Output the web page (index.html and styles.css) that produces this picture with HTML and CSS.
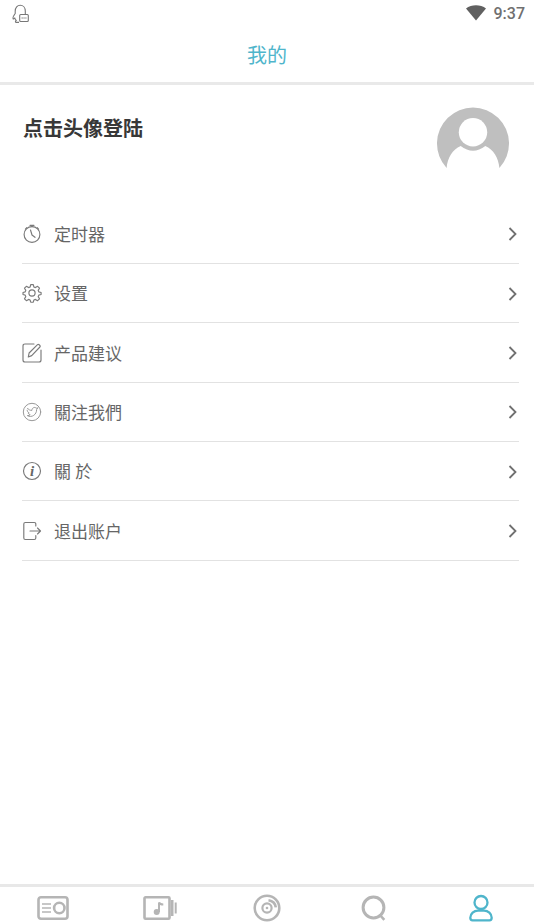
FILE: index.html
```html
<!DOCTYPE html>
<html lang="zh-CN">
<head>
<meta charset="utf-8">
<title>我的</title>
<link rel="stylesheet" href="styles.css">
</head>
<body>
<div class="status">
  <svg class="status-bell" width="20" height="20" viewBox="0 0 20 20" fill="none" stroke="#777" stroke-width="1.1" stroke-linejoin="round"><path d="M15.300 10V7.200C15.300 3.400 13 1.200 10.200 1.200S5.200 3.400 5.200 7.200v2.300C3.800 11.300 2.700 13.400 3.100 14.800c.4.500 1-.1 1.700-.8.2 1 .8 1.900 1.500 2.500-.9.500-1.300 1.500-.3 1.900h3"/><rect x="9.700" y="10.500" width="8.600" height="7" rx="1"/><path d="M11.500 14h5" stroke-dasharray="1.300 .6"/></svg>
  <div class="status-right">
    <svg width="20" height="16" viewBox="0 0 20 16"><path d="M0 3.500C5.500-.9 14.500-.9 20 3.500L10 15.600z" fill="#606060"/></svg>
    <span>9:37</span>
  </div>
</div>
<header class="header"><h1>我的</h1></header>
<main class="main">
  <section class="profile">
    <h2>点击头像登陆</h2>
    <svg class="avatar" width="72" height="72" viewBox="0 0 72 72"><path d="M9.600 61A36 36 0 1 1 62.400 61C61.500 51 56.500 42.500 48.300 39Q36 48.500 23.700 39C15.500 42.500 10.500 51 9.600 61z" fill="#bfbfbf"/><circle cx="36" cy="25.200" r="14.200" fill="#fff"/></svg>
  </section>
  <nav class="menu">
    <a class="row">
      <svg class="icon" viewBox="0 0 20 20"><circle cx="10" cy="10.500" r="7.900"/><path d="M8 1.300h4M10 1.300v1.300M15.200 3.700l1.400 1.400M4.800 3.700L3.400 5.100M8.500 6l1.500 5 3 2.300"/></svg>
      <span>定时器</span><svg class="chevron" viewBox="0 0 8 14"><path d="M1 1l6 6-6 6"/></svg>
    </a>
    <a class="row">
      <svg class="icon" viewBox="0 0 20 20"><circle cx="10" cy="10" r="3.100"/><path d="M8.700 1.600h2.600l.6 2.400 1.500.6 2.200-1.300 1.900 1.900-1.300 2.200.6 1.500 2.300.6v2l-2.300.6-.6 1.500 1.300 2.200-1.900 1.900-2.200-1.300-1.500.6-.6 2.200H8.700l-.6-2.200-1.500-.6-2.200 1.300-1.900-1.900 1.300-2.200-.6-1.500-2.200-.6v-2l2.200-.6.6-1.500-1.300-2.200 1.900-1.900 2.200 1.300 1.500-.6z"/></svg>
      <span>设置</span><svg class="chevron" viewBox="0 0 8 14"><path d="M1 1l6 6-6 6"/></svg>
    </a>
    <a class="row">
      <svg class="icon" viewBox="0 0 20 20"><path d="M12 1H3Q1 1 1 3v14q0 2 2 2h14q2 0 2-2V7M6.300 14l.8-4 8.400-8.400q.8-.6 1.600.1l.8.8q.7.800 0 1.500L9.700 12.600z"/></svg>
      <span>产品建议</span><svg class="chevron" viewBox="0 0 8 14"><path d="M1 1l6 6-6 6"/></svg>
    </a>
    <a class="row">
      <svg class="icon light" viewBox="0 0 20 20"><circle cx="10" cy="10" r="8.700"/><path d="M5.500 6.300c1.100 1.500 2.500 2.100 4.400 2.100 0-2.700 2.900-3.800 4.300-2.200l1.600-.4-1.200 1.800c.2 4.800-4.800 8.600-9.300 6 1.300.1 2.200-.2 2.900-.9-1.300-.3-1.800-1-2-1.800h1C5.800 10.200 5.200 9.300 5.200 8.200"/></svg>
      <span>關注我們</span><svg class="chevron" viewBox="0 0 8 14"><path d="M1 1l6 6-6 6"/></svg>
    </a>
    <a class="row">
      <svg class="icon" viewBox="0 0 20 20"><circle cx="10" cy="10" r="8.500"/><text class="info" x="10" y="15" text-anchor="middle">i</text></svg>
      <span>關 於</span><svg class="chevron" viewBox="0 0 8 14"><path d="M1 1l6 6-6 6"/></svg>
    </a>
    <a class="row">
      <svg class="icon" viewBox="0 0 20 20"><path d="M13.800 5V3q0-1.500-1.500-1.500h-9Q1.800 1.500 1.800 3v14q0 1.500 1.500 1.500h9q1.500 0 1.500-1.500v-2.500M8 10h10.500M15.500 7l3 3-3 3"/></svg>
      <span>退出账户</span><svg class="chevron" viewBox="0 0 8 14"><path d="M1 1l6 6-6 6"/></svg>
    </a>
  </nav>
</main>
<nav class="tabs">
  <a><svg width="34" height="28" viewBox="0 0 34 28"><rect x="2.500" y="3.300" width="29" height="21.400" rx="2.500"/><circle cx="23.300" cy="14" r="5.200"/><path d="M6 10h9M6 14h9M6 18h9" stroke-width="1.500"/></svg></a>
  <a><svg width="34" height="28" viewBox="0 0 34 28"><rect x="1.500" y="3.300" width="25" height="21.400" rx="1"/><path d="M29.200 6v16" stroke-width="2.600"/><path d="M32.700 8.500v11" stroke-width="2"/><path d="M16 18V8.500q1 2 4.300 2" stroke-width="2"/><circle cx="13.700" cy="18" r="3" class="fill"/></svg></a>
  <a><svg width="28" height="28" viewBox="0 0 28 28"><circle cx="14" cy="14" r="12.300"/><circle cx="14" cy="14" r="4.600" stroke-width="2.200"/><circle cx="14" cy="14" r="1.300" class="fill"/><path d="M15.500 6.300q6.500 1 7.300 7" stroke-width="2.600"/></svg></a>
  <a><svg width="28" height="28" viewBox="0 0 28 28"><circle cx="13.500" cy="13.500" r="10.400" stroke-width="3"/><path d="M19.500 20.500l4.800 5.300"/></svg></a>
  <a class="active"><svg width="28" height="28" viewBox="0 0 28 28"><circle cx="14" cy="8.500" r="6.500"/><path d="M5.500 26.300q-2.200 0-2.200-2.500c0-4 3.600-7.200 7.700-7.200h6c4.100 0 7.700 3.200 7.700 7.200q0 2.500-2.200 2.500z"/></svg></a>
</nav>
</body>
</html>
```
FILE: styles.css
```css
* {
  box-sizing: border-box;
}

body {
  margin: 0;
  height: 924px;
  display: flex;
  flex-direction: column;
  overflow: hidden;
  background: #fff;
  color: #666;
  font-family: Roboto, "Noto Sans CJK SC", sans-serif;
}

svg {
  display: block;
  flex: none;
}

h1,
h2 {
  margin: 0;
}

.status {
  height: 28px;
  padding: 0 9px 0 10px;
  display: flex;
  align-items: center;
  justify-content: space-between;
}

.status-right {
  display: flex;
  align-items: center;
  gap: 8px;
  font-size: 16px;
  font-weight: 500;
  line-height: 28px;
  color: #707070;
}

.status-right svg {
  margin-top: -2px;
}

.header {
  height: 57px;
  padding-top: 1px;
  border-bottom: 3px solid #e9e9e9;
  display: flex;
  align-items: center;
  justify-content: center;
}

.header h1 {
  padding-top: 1px;
  font-size: 20px;
  font-weight: 400;
  line-height: 30px;
  color: #4fb5cb;
}

.main {
  flex: 1;
  padding: 22px 15px 0 22px;
}

.profile {
  height: 97.700px;
  padding: 0 10px 0 1px;
  display: flex;
  justify-content: space-between;
  align-items: flex-start;
}

.profile h2 {
  margin-top: 7px;
  font-size: 20px;
  line-height: 30px;
  font-weight: 700;
  color: #383838;
}

.row {
  height: 59.370px;
  padding-right: 2px;
  display: flex;
  align-items: center;
  border-bottom: 1px solid #e2e2e2;
  font-size: 17px;
}

.row span {
  flex: 1;
  margin-left: 12px;
  padding-top: 2px;
  line-height: 26px;
}

.icon {
  width: 20px;
  height: 20px;
  fill: none;
  stroke: #7a7a7a;
  stroke-width: 1.150;
  stroke-linejoin: round;
  stroke-linecap: round;
}

.light {
  stroke: #999;
  stroke-width: 1;
}

.info {
  font: italic bold 15px "Liberation Serif", serif;
  fill: #666;
  stroke: none;
}

.chevron {
  width: 9px;
  height: 14px;
  margin-top: 1px;
  fill: none;
  stroke: #707070;
  stroke-width: 1.800;
}

.tabs {
  height: 40px;
  border-top: 3px solid #e8e8e8;
  padding-top: 7px;
  display: grid;
  grid-template-columns: repeat(5, 1fr);
  justify-items: center;
  color: #b5b5b5;
}

.tabs svg {
  fill: none;
  stroke: currentColor;
  stroke-width: 2.600;
}

.tabs .fill {
  fill: currentColor;
  stroke: none;
}

.tabs .active {
  color: #4fb5cb;
}

.active svg {
  stroke-width: 2.300;
}
```
